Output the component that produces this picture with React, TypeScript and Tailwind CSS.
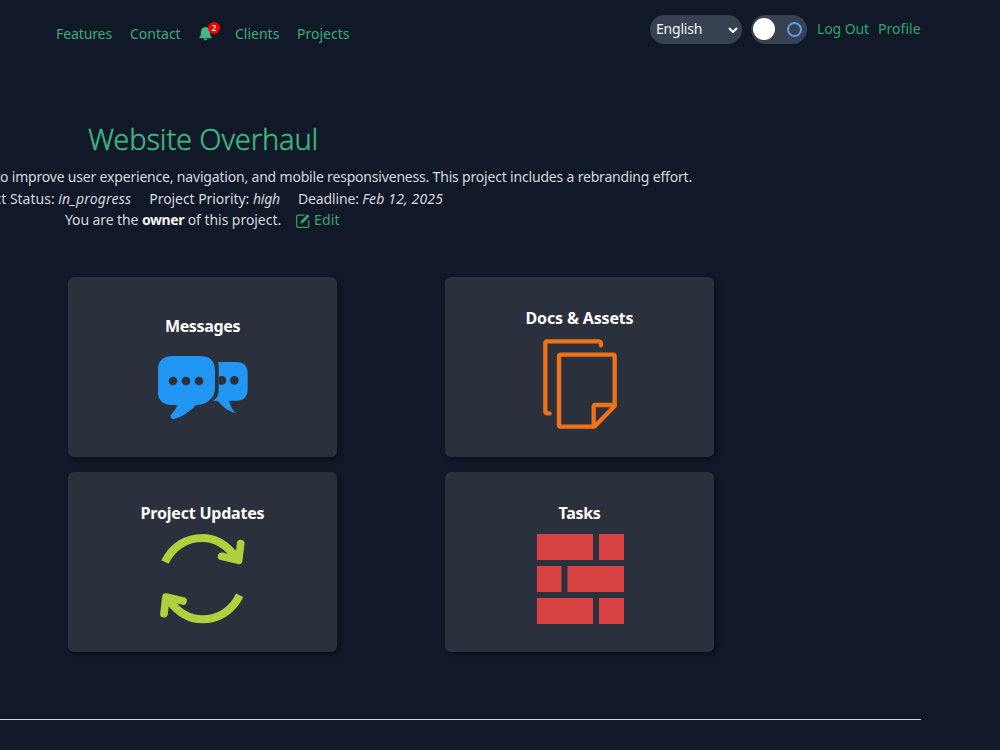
import React from 'react';

interface CardProps {
  title: string;
  titleClass?: string;
  gapClass?: string;
  children: React.ReactNode;
}

const ProjectCard: React.FC<CardProps> = ({ title, titleClass = '', gapClass = 'gap-[9px]', children }) => (
  <a
    href="#"
    className={`flex h-[180px] w-[269px] flex-col items-center justify-center rounded-md bg-[#2a303c] shadow-[3px_3px_5px_rgba(0,0,0,0.3)] ${gapClass}`}
  >
    <h2 className={`whitespace-nowrap text-base font-bold leading-6 text-white ${titleClass}`}>{title}</h2>
    {children}
  </a>
);

const MessagesIcon = () => (
  <svg className="h-[65px] w-[90px] fill-[#2196f3]" viewBox="1 0 270 195">
    <path d="M45 0H127Q172 0 172 45V96C172 126 148 147 115 147C97 167 72 183 49 189C40 191 36 181 41 175Q53 163 60 147H45Q0 147 0 102V45Q0 0 45 0Z" />
    <path d="M182 18H236Q270 18 270 54V98Q270 134 236 134H214Q219 156 235 172Q201 163 181 135L166 134Q183 125 183 106V30Q183 24 182 18Z" />
    <g className="fill-[#2a303c]">
      <circle cx="46" cy="75" r="13" />
      <circle cx="85" cy="75" r="13" />
      <circle cx="124" cy="75" r="13" />
      <path d="M183 62Q188 59 193 60A13 13 0 0 1 193 86Q188 87 183 84Z" />
      <circle cx="230" cy="73" r="13" />
    </g>
  </svg>
);

const DocsIcon = () => (
  <svg
    className="h-[90px] w-[74px] fill-none stroke-[#ef7316]"
    viewBox="0 0 222 270"
    strokeWidth="13"
    strokeLinecap="round"
    strokeLinejoin="round"
  >
    <path d="M174 19V14Q174 7 167 7H13Q7 7 7 13V216Q7 223 14 223H20" />
    <path d="M54 47H209Q215 47 215 53V201L154 263H54Q48 263 48 257V53Q48 47 54 47Z" />
    <path d="M214 198H157Q152 198 152 203V262" />
  </svg>
);

const UpdatesIcon = () => (
  <svg className="size-[90px] fill-none stroke-[#b1d03d]" viewBox="3 1 270 270" strokeWidth="24">
    <g id="arrow">
      <path d="M24 85C47 37 90 13 136 13C176 13 210 36 235 68" />
      <path d="M251 30L245 80L194 68" strokeLinecap="round" strokeLinejoin="round" strokeWidth="23" />
    </g>
    <use href="#arrow" transform="rotate(180 136 135)" />
  </svg>
);

const TasksIcon = () => (
  <svg className="size-[90px] fill-[#d74242]" viewBox="0 0 90 90">
    <path d="M2 0h56v26H2zM64 0h25v26H64zM2 32h24.5v26H2zM32.5 32H89v26H32.5zM2 64h56v26H2zM64 64h25v26H64z" />
  </svg>
);

const Navbar = () => (
  <header className="flex h-[68px] w-[921px] items-start justify-between pl-14">
    <nav className="flex h-[68px] items-center whitespace-nowrap text-[#3cad78]">
      <a href="#" className="w-[74px] tracking-[-0.1px]">Features</a>
      <a href="#" className="w-[69px]">Contact</a>
      <a href="#" className="relative w-9">
        <svg className="h-[15px] w-[13px] fill-[#42b883]" viewBox="0 0.8 13 15">
          <path d="M6.5 0C7 0 7.5.5 7.4 1.1C9.8 1.6 11 3.5 11 5.8C11 8.5 11.5 10.2 13 12H0C1.5 10.2 2 8.5 2 5.8C2 3.5 3.2 1.6 5.6 1.1C5.5.5 6 0 6.5 0ZM4.6 12.6H8.4Q8 14.4 6.5 14.4Q5 14.4 4.6 12.6Z" />
        </svg>
        <span className="absolute -top-[5px] left-[9px] flex size-3 items-center justify-center rounded-full bg-[#f90000] text-[8px] font-semibold leading-none text-white">
          2
        </span>
      </a>
      <a href="#" className="w-[62px]">Clients</a>
      <a href="#">Projects</a>
    </nav>
    <div className="mt-[15px] flex h-[29px] items-center whitespace-nowrap">
      <button className="mr-[9px] flex h-[29px] w-[92px] items-center justify-between rounded-full bg-[#374151] pl-1.5 pr-1 text-gray-100">
        <span className="pb-0.5 tracking-[-0.2px]">English</span>
        <svg className="h-[6px] w-[10px] fill-none stroke-white" viewBox="0 0 10 6" strokeWidth="2">
          <path d="M1 1L5 5L9 1" />
        </svg>
      </button>
      <button className="mr-[10px] flex h-[29px] w-14 items-center justify-between rounded-full bg-[#374151] pb-px pl-0.5 pr-[5px]">
        <span className="size-[22px] rounded-full bg-white" />
        <span className="size-[15px] rounded-full border-2 border-[#5c9df2]" />
      </button>
      <a href="#" className="w-[61px] pb-0.5 tracking-[-0.1px] text-[#30a46c]">Log Out</a>
      <a href="#" className="w-[43px] pb-0.5 tracking-[0.05px] text-[#30a46c]">Profile</a>
    </div>
  </header>
);

const App: React.FC = () => {
  return (
    <div className="h-[750px] w-full overflow-hidden bg-[#111827] font-['Noto_Sans',sans-serif] text-sm leading-5 text-[#d5d8dd]">
      <Navbar />

      <main>
        <h1 className="mt-[51px] h-10 pl-[88px] text-[29px] font-light leading-10 tracking-[-0.17px] text-[#3fb680] [-webkit-text-stroke:0.4px_#3fb680]">
          Website Overhaul
        </h1>

        <section className="whitespace-nowrap pt-[7px] leading-[21.5px]">
          <div className="flex w-[692px] justify-end tracking-[-0.187px]">
            <p>to improve user experience, navigation, and mobile responsiveness. This project includes a rebranding effort.</p>
          </div>
          <div className="flex w-[443px] justify-end gap-[18px]">
            <span>
              Project Status: <i className="inline-block w-[73px] tracking-[0.17px]">in_progress</i>
            </span>
            <span className="w-[131px] tracking-[-0.06px]">
              Project Priority: <i className="tracking-[-0.2px]">high</i>
            </span>
            <span className="w-[145px]">
              <span className="tracking-[-0.15px]">Deadline: </span>
              <i className="tracking-[0.15px]">Feb 12, 2025</i>
            </span>
          </div>
          <div className="flex items-center pl-[65px]">
            <p className="w-[231px]">
              <span className="tracking-[-0.1px]">You are the </span>
              <b className="tracking-[-0.4px] text-gray-100">owner</b>
              <span className="tracking-[-0.05px]"> of this project.</span>
            </p>
            <a href="#" className="flex items-center gap-1 text-[#35a673]">
              <svg className="mt-0.5 size-3.5 fill-none stroke-current" viewBox="0 0 14 14" strokeWidth="1.2">
                <path d="M8.5 1.2H2Q.7 1.2 .7 2.5V12Q.7 13.3 2 13.3H11.5Q12.8 13.3 12.8 12V6" />
                <path className="fill-current" strokeWidth="0" d="M11.7.3L13.7 2.2L7.2 8.8L4.3 9.8L5.2 6.8Z" />
              </svg>
              <span className="tracking-[0.2px]">Edit</span>
            </a>
          </div>
        </section>

        <section className="mt-[46.5px] flex gap-[108px] pl-[68px]">
          <div className="flex flex-col gap-[15px]">
            <ProjectCard title="Messages" titleClass="tracking-[-0.35px]" gapClass="gap-[18px]">
              <MessagesIcon />
            </ProjectCard>
            <ProjectCard title="Project Updates" titleClass="tracking-[-0.2px]">
              <UpdatesIcon />
            </ProjectCard>
          </div>
          <div className="flex flex-col gap-[15px]">
            <ProjectCard title="Docs & Assets" titleClass="tracking-[-0.15px]">
              <DocsIcon />
            </ProjectCard>
            <ProjectCard title="Tasks" titleClass="tracking-[-0.3px]">
              <TasksIcon />
            </ProjectCard>
          </div>
        </section>
      </main>

      <hr className="mt-[67px] w-[921px] border-t border-gray-300" />
    </div>
  );
};

export default App;
